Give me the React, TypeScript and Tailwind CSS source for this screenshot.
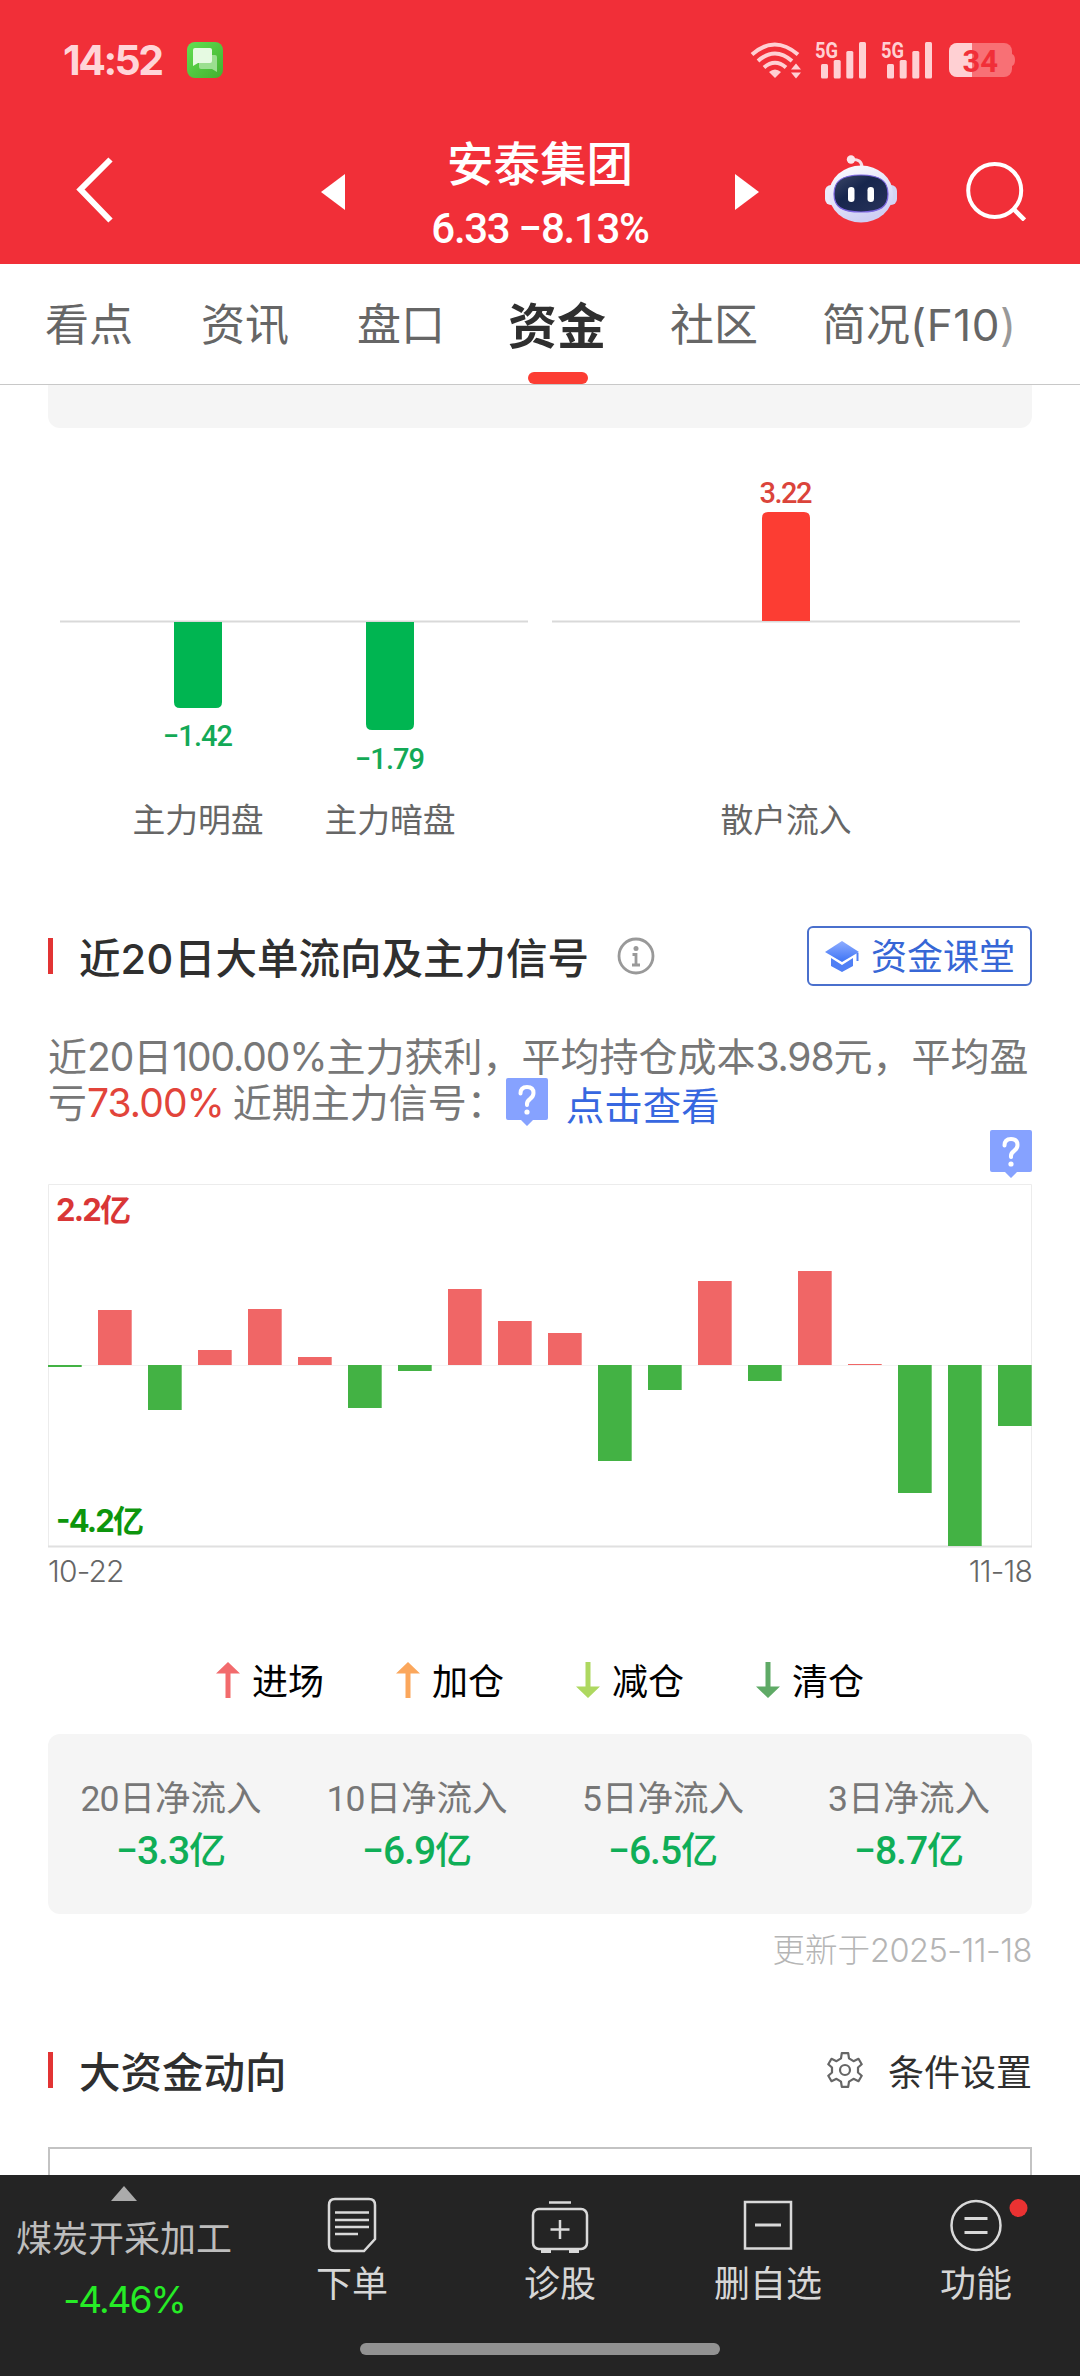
import type { ReactNode } from 'react';
import clsx from 'clsx';

const TABS = ['看点', '资讯', '盘口', '资金', '社区'];

// Net big-order flow per day, as pixel heights around the zero line
const DAILY_FLOW = [-2, 55, -45, 15, 56, 8, -43, -6, 76, 44, 32, -96, -25, 84, -16, 94, 1, -128, -181, -61];

const LEGEND = [
    { label: '进场', color: '#f26b6d', up: true },
    { label: '加仓', color: '#fba75c', up: true },
    { label: '减仓', color: '#aed860', up: false },
    { label: '清仓', color: '#5faa66', up: false },
];

const NET_INFLOW = [
    { days: '20', value: '−3.3' },
    { days: '10', value: '−6.9' },
    { days: '5', value: '−6.5' },
    { days: '3', value: '−8.7' },
];

interface TextProps {
    children: ReactNode;
    className?: string;
}

function Num({ children, className }: TextProps) {
    return <span className={clsx("font-['Inter',sans-serif] leading-none", className)}>{children}</span>;
}

function Din({ children, className }: TextProps) {
    return <span className={clsx("font-['Roboto',sans-serif] leading-none", className)}>{children}</span>;
}

function SignalBars() {
    return (
        <svg className="w-[52px] h-[38px] overflow-visible" viewBox="0 0 52 38" fill="#ffd0d3">
            <text x="0" y="16.5" fontSize="22" fontWeight="700" fontFamily="Roboto, sans-serif" textLength="23" lengthAdjust="spacingAndGlyphs">5G</text>
            <rect x="6" y="23" width="7" height="14.5" rx="1.5" />
            <rect x="18.7" y="19" width="7" height="18.5" rx="1.5" />
            <rect x="31.3" y="10" width="7" height="27.5" rx="1.5" />
            <rect x="44" y="1" width="7" height="36.5" rx="1.5" />
        </svg>
    );
}

function StatusBar() {
    return (
        <div className="flex items-center h-[120px] pl-[63px] pr-[64px]">
            <Num className="text-[41px] font-bold tracking-[-2.5px] text-[#ffd5d8] w-[100px]">14:52</Num>
            <svg className="w-9 h-9 ml-6" viewBox="0 0 36 36">
                <defs>
                    <linearGradient id="msg" x1="0" y1="0" x2="1" y2="1">
                        <stop offset="0" stopColor="#62df52" />
                        <stop offset="1" stopColor="#43b02f" />
                    </linearGradient>
                </defs>
                <rect width="36" height="36" rx="8" fill="url(#msg)" />
                <path d="M13 13h15q2 0 2 2v15l-5-3H14q-2 0-2-2V15z" fill="#9bdf90" />
                <path d="M8 6h15q2 0 2 2v11q0 2-2 2H11l-5 3V8q0-2 2-2z" fill="#e6fae2" />
            </svg>
            <div className="flex items-center ml-auto">
                <svg className="w-[52px] h-[38px] mr-[13px]" viewBox="0 0 52 38" fill="none" stroke="#ffd0d3" strokeWidth="4">
                    <path d="M2 13.5Q24.5-6.5 48 13.5" />
                    <path d="M8 20Q25 5 42 20" />
                    <path d="M14 26.500Q25 17 36 26.500" />
                    <path d="M19 31q6-5 12 0l-6 6z" fill="#ffd0d3" stroke="none" />
                    <path d="M41 28.500h10l-5-6zM41 31.500h10l-5 6z" fill="#ffd0d3" stroke="none" />
                </svg>
                <SignalBars />
                <div className="w-[14px]" />
                <SignalBars />
                <svg className="w-[67px] h-[36px] ml-[16px] overflow-visible" viewBox="0 0 67 36">
                    <clipPath id="battery">
                        <rect y="1" width="63" height="34" rx="8" />
                    </clipPath>
                    <g clipPath="url(#battery)">
                        <rect width="63" height="36" fill="#f87075" />
                        <rect width="23" height="36" fill="#ffd0d3" />
                    </g>
                    <path d="M63 12q3 1 3 6t-3 6z" fill="#f87075" />
                    <text x="13.500" y="29.500" fontSize="31" fontWeight="700" fontFamily="Roboto, sans-serif" fill="#f12f38">34</text>
                </svg>
            </div>
        </div>
    );
}

function RobotIcon() {
    return (
        <svg className="w-[72px] h-[68px]" viewBox="0 0 72 68">
            <defs>
                <linearGradient id="shell" x1="0" y1="0" x2="0.4" y2="1">
                    <stop offset="0" stopColor="#ffffff" />
                    <stop offset="1" stopColor="#cfcff4" />
                </linearGradient>
                <linearGradient id="visor" x1="0" y1="0" x2="1" y2="1">
                    <stop offset="0" stopColor="#3c4767" />
                    <stop offset="0.4" stopColor="#17264d" />
                    <stop offset="1" stopColor="#28335a" />
                </linearGradient>
            </defs>
            <path d="M26 4.500q11-1 11 8" fill="none" stroke="#f7dde6" strokeWidth="3" />
            <circle cx="26" cy="4.500" r="4.200" fill="#fbe6ec" />
            <rect x="0" y="30" width="12" height="20" rx="6" fill="#ecebfa" />
            <rect x="60" y="30" width="12" height="20" rx="6" fill="#d3d4f3" />
            <ellipse cx="36" cy="39" rx="32" ry="28.500" fill="url(#shell)" />
            <path d="M36 20c19 0 27 6 27 19s-8 18-27 18S9 52 9 39s8-19 27-19z" fill="url(#visor)" stroke="#7c66e0" strokeWidth="1.200" />
            <rect x="23" y="32" width="6.500" height="15" rx="3.200" fill="#fff" />
            <rect x="42.500" y="32" width="6.500" height="15" rx="3.200" fill="#fff" />
        </svg>
    );
}

function TitleBar() {
    return (
        <div className="flex items-start h-[144px] pl-[76px] pr-[54px] text-white">
            <svg className="w-[37px] h-[66px] mt-[37px]" viewBox="0 0 37 66" fill="none" stroke="currentColor" strokeWidth="6">
                <path d="M34.500 2.500L4.500 32.500l30 31" />
            </svg>
            <svg className="w-6 h-9 mt-[54px] ml-[208px]" viewBox="0 0 24 36" fill="currentColor">
                <path d="M24 0v36L0 18z" />
            </svg>
            <div className="flex flex-col items-center w-[390px] mt-[15px]">
                <h1 className="text-[46.500px] leading-[52px] font-medium">安泰集团</h1>
                <Din className="text-[42px] leading-[52px] mt-[21px] font-medium tracking-[-1.3px] whitespace-nowrap">6.33 −8.13%</Din>
            </div>
            <svg className="w-6 h-9 mt-[54px]" viewBox="0 0 24 36" fill="currentColor">
                <path d="M0 0v36l24-18z" />
            </svg>
            <div className="mt-[35px] ml-[66px]">
                <RobotIcon />
            </div>
            <svg className="w-[60px] h-[60px] mt-[41px] ml-auto" viewBox="0 0 60 60" fill="none" stroke="currentColor" strokeWidth="4">
                <ellipse cx="28.700" cy="29.500" rx="26.500" ry="26.500" />
                <path d="M47 47.500l11.500 11.500" strokeWidth="4.500" />
            </svg>
        </div>
    );
}

function TabBar() {
    return (
        <nav className="flex h-[121px] pl-[45px] border-b border-[#c8c8c8] bg-white text-[44px] leading-[117px] text-[#666]">
            {TABS.map((tab) =>
                tab === '资金' ? (
                    <div key={tab} className="relative w-[157px] text-[49px] font-bold text-[#2f2f2f]">
                        <span className="-ml-[5px]">{tab}</span>
                        <div className="absolute bottom-0 left-[15px] w-[60px] h-3 rounded-full bg-[#fc3d33]" />
                    </div>
                ) : (
                    <div key={tab} className="w-[156px]">{tab}</div>
                ),
            )}
            <div className="-ml-[4px] whitespace-nowrap">
                简况<Num className="tracking-[0.600px]">(F10</Num>
                <Num className="text-[#999]">)</Num>
            </div>
        </nav>
    );
}

function MainForceChart() {
    return (
        <div>
            <svg className="block w-[984px] h-[362px]" viewBox="0 0 984 362" fontFamily="Roboto, sans-serif" fontSize="29" fontWeight="500" textAnchor="middle">
                <path d="M12 193.500h468M504 193.500h468" stroke="#d9d9d9" strokeWidth="2" />
                <path d="M126 194h48v80q0 6-6 6h-36q-6 0-6-6z" fill="#00b551" />
                <path d="M318 194h48v102q0 6-6 6h-36q-6 0-6-6z" fill="#00b551" />
                <path d="M714 193v-103q0-6 6-6h36q6 0 6 6v103z" fill="#fc3d33" />
                <text x="150" y="318" fill="#13a956" textLength="70">−1.42</text>
                <text x="342" y="341" fill="#13a956" textLength="70">−1.79</text>
                <text x="738" y="75" fill="#db443b" textLength="53">3.22</text>
            </svg>
            <div className="flex h-[60px] pl-[54px] text-[32.800px] leading-[56px] text-[#666] text-center">
                <div className="w-48">主力明盘</div>
                <div className="w-48">主力暗盘</div>
                <div className="w-48 ml-[204px]">散户流入</div>
            </div>
        </div>
    );
}

function QuestionTag() {
    return (
        <svg className="w-[42px] h-[48px] shrink-0" viewBox="0 0 42 48">
            <path d="M2 0h38q2 0 2 2v38q0 2-2 2H27l-6 6-6-6H2q-2 0-2-2V2q0-2 2-2z" fill="#86a2ff" />
            <path d="M14.500 15.500q0-6.500 6.500-6.500t6.500 6q0 3.500-3.500 6t-3 6" fill="none" stroke="#fff" strokeWidth="4" strokeLinecap="round" />
            <circle cx="21" cy="34" r="2.600" fill="#fff" />
        </svg>
    );
}

function SectionTitle({ children }: TextProps) {
    return (
        <div className="flex items-center">
            <div className="w-[5px] h-9 bg-[#e23434]" />
            <h2 className="ml-[26px] text-[41.500px] leading-[58px] font-medium text-[#2f2f2f] whitespace-nowrap">{children}</h2>
        </div>
    );
}

function FlowChart() {
    return (
        <svg className="block w-[984px] h-[364px]" viewBox="0 0 984 364">
            <path d="M0.500 363V0.500h983V363" fill="none" stroke="#ececec" />
            <path d="M0 181.500h984" stroke="#f3f3f3" />
            <path d="M0 362.500h984" stroke="#e0e0e0" strokeWidth="2" />
            {DAILY_FLOW.map((v, i) => (
                <rect
                    key={i}
                    x={i * 50}
                    y={v > 0 ? 181 - v : 181}
                    width="33.700"
                    height={Math.abs(v)}
                    fill={v > 0 ? '#f06666' : '#43b244'}
                />
            ))}
            <g fontFamily="'Inter', 'Noto Sans CJK SC', sans-serif" fontSize="31" fontWeight="700">
                <text x="8" y="37" fill="#d93636" textLength="75">2.2亿</text>
                <text x="8" y="348" fill="#0d950d" textLength="88">-4.2亿</text>
            </g>
        </svg>
    );
}

function Legend() {
    return (
        <div className="flex pl-[168px] h-[60px] items-center">
            {LEGEND.map((item) => (
                <div key={item.label} className="flex items-center w-[180px]">
                    <svg className="w-6 h-9" viewBox="0 0 24 36" fill={item.color}>
                        {item.up ? <path d="M12 0l12 11.500h-9.500V36h-5V11.500H0z" /> : <path d="M12 36L0 24.500h9.500V0h5v24.500H24z" />}
                    </svg>
                    <span className="ml-3 text-[36px] leading-[50px] pb-[2px] text-black">{item.label}</span>
                </div>
            ))}
        </div>
    );
}

function InflowSummary() {
    return (
        <div className="flex h-[180px] rounded-xl bg-[#f5f5f5] pt-[37px]">
            {NET_INFLOW.map((item) => (
                <div key={item.days} className="flex-1 text-center">
                    <div className="text-[35.500px] leading-[50px] text-[#777]">
                        <Din className="tracking-[-1px] mr-px">{item.days}</Din>日净流入
                    </div>
                    <div className="text-[37px] leading-[52px] mt-px font-medium text-[#0fae57]">
                        <Din className="text-[39px] tracking-[-1px]">{item.value}</Din>亿
                    </div>
                </div>
            ))}
        </div>
    );
}

function NavItem({ label, children }: { label: string; children: ReactNode }) {
    return (
        <div className="flex flex-1 flex-col items-center pt-[21px]">
            <svg className="w-[52px] h-[58px] overflow-visible" viewBox="0 0 52 58" fill="none" stroke="#d9d9d9" strokeWidth="2.500">
                {children}
            </svg>
            <span className="mt-[2px]">{label}</span>
        </div>
    );
}

function BottomNav() {
    return (
        <footer className="h-[201px] bg-[#242424] text-[#d6d6d6] text-[36px] leading-[50px]">
            <div className="flex h-[168px]">
                <div className="flex flex-col items-center w-[248px] pt-[11px] text-[#bdbdbd]">
                    <svg className="w-[26px] h-[15px]" viewBox="0 0 26 15" fill="#ababab">
                        <path d="M13 0l13 15H0z" />
                    </svg>
                    <span className="mt-[10px]">煤炭开采加工</span>
                    <Num className="mt-[20px] text-[37px] tracking-[-2px] text-[#26ec26]">-4.46%</Num>
                </div>
                <div className="flex flex-1 text-center">
                    <NavItem label="下单">
                        <path d="M9 3h34q6 0 6 6v34L38 55H9q-6 0-6-6V9q0-6 6-6z" />
                        <path d="M9 16.500h34M9 24h34M9 31h34M9 38h23" />
                    </NavItem>
                    <NavItem label="诊股">
                        <rect x="-1" y="13" width="54" height="40" rx="6" />
                        <path d="M15 6.500h22M26 24v19M16.500 33.500h19" />
                        <path d="M7 55h10M35 55h10" strokeWidth="4" />
                    </NavItem>
                    <NavItem label="删自选">
                        <rect x="3" y="6" width="46" height="46.500" />
                        <path d="M13 29h26" strokeWidth="3" />
                    </NavItem>
                    <NavItem label="功能">
                        <circle cx="26" cy="29.500" r="24.500" />
                        <path d="M14.500 22.500h23M14.500 36.500h23" strokeWidth="3" />
                        <circle cx="68.500" cy="12" r="9" fill="#ea3232" stroke="none" />
                    </NavItem>
                </div>
            </div>
            <div className="w-[360px] h-3 mx-auto rounded-full bg-[#929292]" />
        </footer>
    );
}

export default function App() {
    return (
        <div className="flex flex-col w-[1080px] h-[2376px] overflow-hidden bg-white font-['Noto_Sans_CJK_SC',sans-serif]">
            <header className="bg-[#f12f38]">
                <StatusBar />
                <TitleBar />
            </header>
            <TabBar />

            <main className="h-[1790px] px-12 overflow-hidden">
                <div className="h-[43px] rounded-b-xl bg-[#f5f5f5]" />
                <MainForceChart />

                <div className="flex items-center justify-between h-[60px] mt-[76px]">
                    <div className="flex items-center">
                        <SectionTitle>
                            近<Num className="tracking-[0.500px]">20</Num>日大单流向及主力信号
                        </SectionTitle>
                        <svg className="w-[38px] h-[38px] ml-[28px]" viewBox="0 0 38 38" fill="none" stroke="#999" strokeWidth="2.800">
                            <circle cx="19" cy="19" r="17" />
                            <circle cx="19" cy="11.500" r="2.500" fill="#999" stroke="none" />
                            <path d="M15.500 17.500H19V28M15 28h8" />
                        </svg>
                    </div>
                    <button className="flex items-center w-[225px] h-[60px] pl-4 border-2 border-[#4a70cd] rounded-md text-[36px] leading-[52px] text-[#3767d6]">
                        <svg className="w-[34px] h-[32px] mr-3" viewBox="0 0 34 32">
                            <defs>
                                <linearGradient id="cap" x1="0" y1="0" x2="0" y2="1">
                                    <stop offset="0" stopColor="#8fadff" />
                                    <stop offset="1" stopColor="#3d74f5" />
                                </linearGradient>
                            </defs>
                            <path d="M6 18l11 7 11-7v8l-11 6-11-6z" fill="#5080f5" />
                            <path d="M17 1l17 11-17 10L0 12z" fill="url(#cap)" />
                            <path d="M32.500 13v8" stroke="#5080f5" strokeWidth="2" />
                        </svg>
                        <span className="pb-1">资金课堂</span>
                    </button>
                </div>

                <div className="mt-[44px] text-[39px] text-[#777] whitespace-nowrap">
                    <p className="h-[48px] leading-[48px]">
                        近<Num className="tracking-[-1.1px]">20</Num>日<Num className="tracking-[-1.1px]">100.00%</Num>主力获利，平均持仓成本<Num className="tracking-[-1.1px]">3.98</Num>元，平均盈
                    </p>
                    <div className="flex items-start h-[52px] leading-[44px]">
                        <p>
                            亏<Num className="tracking-[-0.900px] text-[#e2443a]">73.00%</Num> 近期主力信号：
                        </p>
                        <QuestionTag />
                        <a className="ml-[18px] mt-[3px] text-[38.500px] text-[#3767e0]">点击查看</a>
                    </div>
                </div>
                <div className="flex justify-end h-[54px]">
                    <QuestionTag />
                </div>

                <FlowChart />
                <div className="flex justify-between mt-[8px] h-[32px] text-[30px] font-light text-[#666]">
                    <Num className="leading-[32px] tracking-[-0.800px]">10-22</Num>
                    <Num className="leading-[32px] tracking-[-0.800px]">11-18</Num>
                </div>
                <div className="mt-[62px]">
                    <Legend />
                </div>
                <div className="mt-[24px]">
                    <InflowSummary />
                </div>
                <p className="mt-[11px] text-right text-[32.500px] leading-[46px] font-light text-[#b5b5b5]">
                    更新于<Num className="tracking-[-0.500px]">2025-11-18</Num>
                </p>

                <div className="flex items-center justify-between mt-[69px] h-[60px]">
                    <SectionTitle>大资金动向</SectionTitle>
                    <div className="flex items-center text-[36px] leading-[52px] text-[#2f2f2f]">
                        <svg className="w-9 h-9 mr-[25px]" viewBox="0 0 36 36" fill="none" stroke="#666" strokeWidth="2.200" strokeLinejoin="round">
                            <path d="M14.800 1.200h6.400L22 6.300l4.500 2.900 5-2.400 3.200 5.400L31 15.500v5l3.700 3.300-3.200 5.400-5-2.400-4.500 2.900-.8 5.100h-6.400L14 29.700l-4.500-2.900-5 2.400-3.200-5.400L5 20.500v-5l-3.700-3.300 3.200-5.400 5 2.400L14 6.300z" />
                            <circle cx="18" cy="18" r="5" />
                        </svg>
                        条件设置
                    </div>
                </div>
                <div className="mt-[47px] h-20 border-2 border-[#c3c3c3]" />
            </main>

            <BottomNav />
        </div>
    );
}
